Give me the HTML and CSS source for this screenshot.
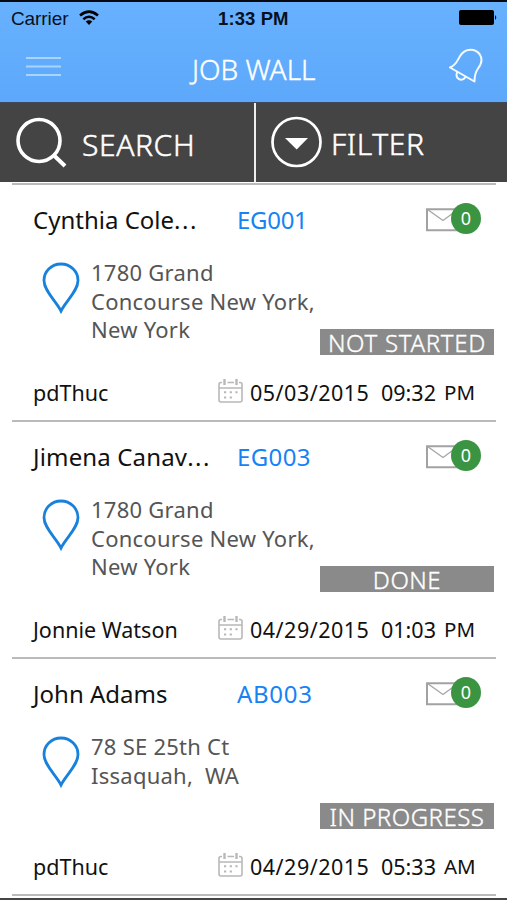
FILE: index.html
```
<!DOCTYPE html>
<html lang="en">
<head>
<meta charset="utf-8">
<title>Job Wall</title>
<link rel="stylesheet" href="styles.css">
</head>
<body>
<svg class="defs" aria-hidden="true">
  <symbol id="pin" viewBox="0 0 38 52"><path d="M19 49C14 39 2 29 2 18.500a17 16.500 0 0 1 34 0C36 29 24 39 19 49Z" fill="none" stroke="#1781dc" stroke-width="2.800"/></symbol>
  <symbol id="mail" viewBox="0 0 36 24"><path d="M1 1.200H35V22.300H1Z" fill="none" stroke="#a2a2a2" stroke-width="2"/><path d="M1.500 1.500 17 12.500 32 1.500" fill="none" stroke="#a6a6a6" stroke-width="1.400"/></symbol>
  <symbol id="calendar" viewBox="0 0 26 26"><g fill="none" stroke="#b8b8b8" stroke-width="1.600"><path d="M4 4.500H3a2 2 0 0 0-2 2V22a2 2 0 0 0 2 2H22a2 2 0 0 0 2-2V6.500a2 2 0 0 0-2-2H21M9.500 4.500H16M1 10H24"/><path d="M6.500 1V7M18.500 1V7" stroke-width="2.400"/><path d="M6 14.200H20M6 19.500H14" stroke-width="2" stroke-dasharray="2.200 3.500"/></g></symbol>
</svg>
<header class="top">
  <div class="status">
    <span class="carrier">Carrier</span>
    <svg class="wifi" viewBox="0 0 20 16"><g fill="none" stroke="#000" stroke-width="2.500"><path d="M1 5.500Q10-2.200 19 5.500"/><path d="M4.300 9.300Q10 4.200 15.700 9.300"/></g><path d="M6.700 11.500Q10 8.800 13.300 11.500L10 15Z"/></svg>
    <span class="clock">1:33 PM</span>
    <svg class="battery" viewBox="0 0 38 16"><rect width="35" height="15" rx="2"/><path d="M36 5q2.500 2.500 0 5Z"/></svg>
  </div>
  <nav class="nav">
    <svg class="menu" viewBox="0 0 35 21"><path d="M0 2H35M0 10.500H35M0 19H35" stroke="#a9d4fe" stroke-width="2"/></svg>
    <h1 class="title">JOB WALL</h1>
    <svg class="bell" viewBox="0 0 36 36"><g fill="none" stroke="#f4faff" stroke-width="2" stroke-linejoin="round"><path d="M3 19.500C11 16 10 11 15 5.500C20 .5 28 .5 32.500 6C36 11 34.500 16 31 20.500C28 25 27.500 28 27.500 33.500Z"/><path d="M10.300 23.800C7.500 30 14 35 18.800 28.800"/></g></svg>
  </nav>
</header>
<div class="tools">
  <div class="tool search"><svg class="lens" viewBox="0 0 52 52"><g fill="none" stroke="#fff"><circle cx="23" cy="23.500" r="21" stroke-width="3.600"/><path d="M37.500 38 49 49" stroke-width="4"/></g></svg><span class="label">SEARCH</span></div>
  <div class="tool filter"><svg class="drop" viewBox="0 0 52 52"><circle cx="25.500" cy="26" r="24" fill="none" stroke="#fff" stroke-width="2.700"/><path d="M14 22H37L25.700 33.500Z" fill="#fff"/></svg><span class="label">FILTER</span></div>
</div>
<main class="jobs">
  <article class="job">
    <div class="head"><span class="name cynthia">Cynthia Cole<i>...</i></span><span class="code early">EG001</span><div class="mail"><svg><use href="#mail"/></svg><b class="count">0</b></div></div>
    <div class="body"><svg class="pin"><use href="#pin"/></svg><p class="address">1780 Grand<br>Concourse New York,<br>New York</p></div>
    <div class="state started">NOT STARTED</div>
    <div class="foot"><span class="owner">pdThuc</span><svg class="cal"><use href="#calendar"/></svg><span class="date">05/03/2015</span><span class="time">09:32</span><span class="half">PM</span></div>
  </article>
  <article class="job">
    <div class="head"><span class="name jimena">Jimena Canav<i>...</i></span><span class="code">EG003</span><div class="mail"><svg><use href="#mail"/></svg><b class="count">0</b></div></div>
    <div class="body"><svg class="pin"><use href="#pin"/></svg><p class="address">1780 Grand<br>Concourse New York,<br>New York</p></div>
    <div class="state done">DONE</div>
    <div class="foot"><span class="owner">Jonnie Watson</span><svg class="cal"><use href="#calendar"/></svg><span class="date">04/29/2015</span><span class="time">01:03</span><span class="half">PM</span></div>
  </article>
  <article class="job">
    <div class="head"><span class="name john">John Adams</span><span class="code wide">AB003</span><div class="mail"><svg><use href="#mail"/></svg><b class="count">0</b></div></div>
    <div class="body"><svg class="pin"><use href="#pin"/></svg><p class="address">78 SE 25th Ct<br>Issaquah,&nbsp; WA</p></div>
    <div class="state progress">IN PROGRESS</div>
    <div class="foot"><span class="owner">pdThuc</span><svg class="cal"><use href="#calendar"/></svg><span class="date">04/29/2015</span><span class="time">05:33</span><span class="half">AM</span></div>
  </article>
  <div class="end"></div>
</main>
<footer class="edge"></footer>
</body>
</html>
```
FILE: styles.css
```
* { box-sizing: border-box; }
body { margin: 0; height: 900px; overflow: hidden; background: #fff; color: #111; font-family: "Noto Sans", sans-serif; white-space: nowrap; }
svg { display: block; }
.defs { display: none; }
.top { height: 102px; border-top: 2px solid #060a10; background: linear-gradient(#67b1ff, #5da8fa); }
.status { height: 33px; padding: 7px 10px 0 11px; display: grid; grid-template-columns: 68px 139px 1fr 38px; font: 19px/20px "Liberation Sans", sans-serif; color: #07111b; }
.carrier { letter-spacing: -.1px; }
.wifi { width: 20px; height: 16px; margin-top: 1px; }
.clock { font-weight: bold; font-size: 18.500px; letter-spacing: .1px; }
.battery { width: 38px; height: 16px; margin-top: 1px; }
.nav { height: 67px; padding: 0 24px 0 26px; display: grid; grid-template-columns: 166px 1fr 36px; }
.menu { width: 35px; height: 21px; margin-top: 21px; }
.title { margin: 14px 0 0; font-size: 28px; line-height: 40px; font-weight: 300; color: #fff; -webkit-text-stroke: .4px #fff; }
.bell { width: 36px; height: 36px; margin-top: 13px; }
.tools { height: 80px; display: grid; grid-template-columns: 254px 253px; background: #444; border-top: 1px solid #3e4a55; color: #fff; }
.tool { display: flex; }
.search { padding-left: 16px; }
.lens { width: 52px; height: 52px; margin: 14px 14px 0 0; }
.filter { border-left: 2px solid #eee; padding-left: 15px; }
.drop { width: 52px; height: 52px; margin: 13px 8px 0 0; }
.label { font-size: 30px; line-height: 40px; font-weight: 300; margin-top: 22px; letter-spacing: .6px; -webkit-text-stroke: .5px #fff; }
.filter .label { margin-top: 21px; }
.jobs { padding: 1px 11px 0 12px; }
.job { height: 237px; border-top: 2px solid #bababa; }
.end { height: 2px; background: #bababa; }
.edge { height: 2px; margin-top: 2px; background: #444; }
.head { height: 75px; padding: 18px 0 0 21px; display: grid; grid-template-columns: 204px 189px 56px; font-size: 24px; line-height: 34px; }
.name i { font-style: normal; letter-spacing: 1.500px; }
.jimena { letter-spacing: .150px; }
.code { color: #1683f4; letter-spacing: .4px; }
.early { letter-spacing: -.3px; }
.wide { letter-spacing: .7px; }
.mail { display: flex; }
.mail svg { width: 36px; height: 24px; margin-top: 5px; }
.count { width: 30px; height: 31px; margin: 0 0 0 -11px; border-radius: 50%; background: #3b9441; color: #fff; font-size: 18px; line-height: 31px; font-weight: 400; text-align: center; flex: none; }
.body { height: 69px; padding-left: 30px; display: flex; }
.pin { width: 38px; height: 52px; margin-top: 2px; }
.address { margin: -2px 0 0 11px; font-size: 22px; line-height: 28.600px; color: #555; letter-spacing: .25px; }
.state { width: 174px; height: 26px; margin-left: 308px; background: #8a8a8a; color: #fff; font-size: 24px; line-height: 28px; text-align: center; font-weight: 300; letter-spacing: .5px; -webkit-text-stroke: .35px #fff; }
.started { letter-spacing: .7px; }
.foot { height: 65px; padding: 21px 0 0 21px; display: grid; grid-template-columns: 185px 32px 131px 63px 40px; font-size: 21.500px; line-height: 33px; }
.cal { width: 26px; height: 26px; margin-top: 2px; }
.date { letter-spacing: .5px; }
.half { font-size: 20.500px; }
```
